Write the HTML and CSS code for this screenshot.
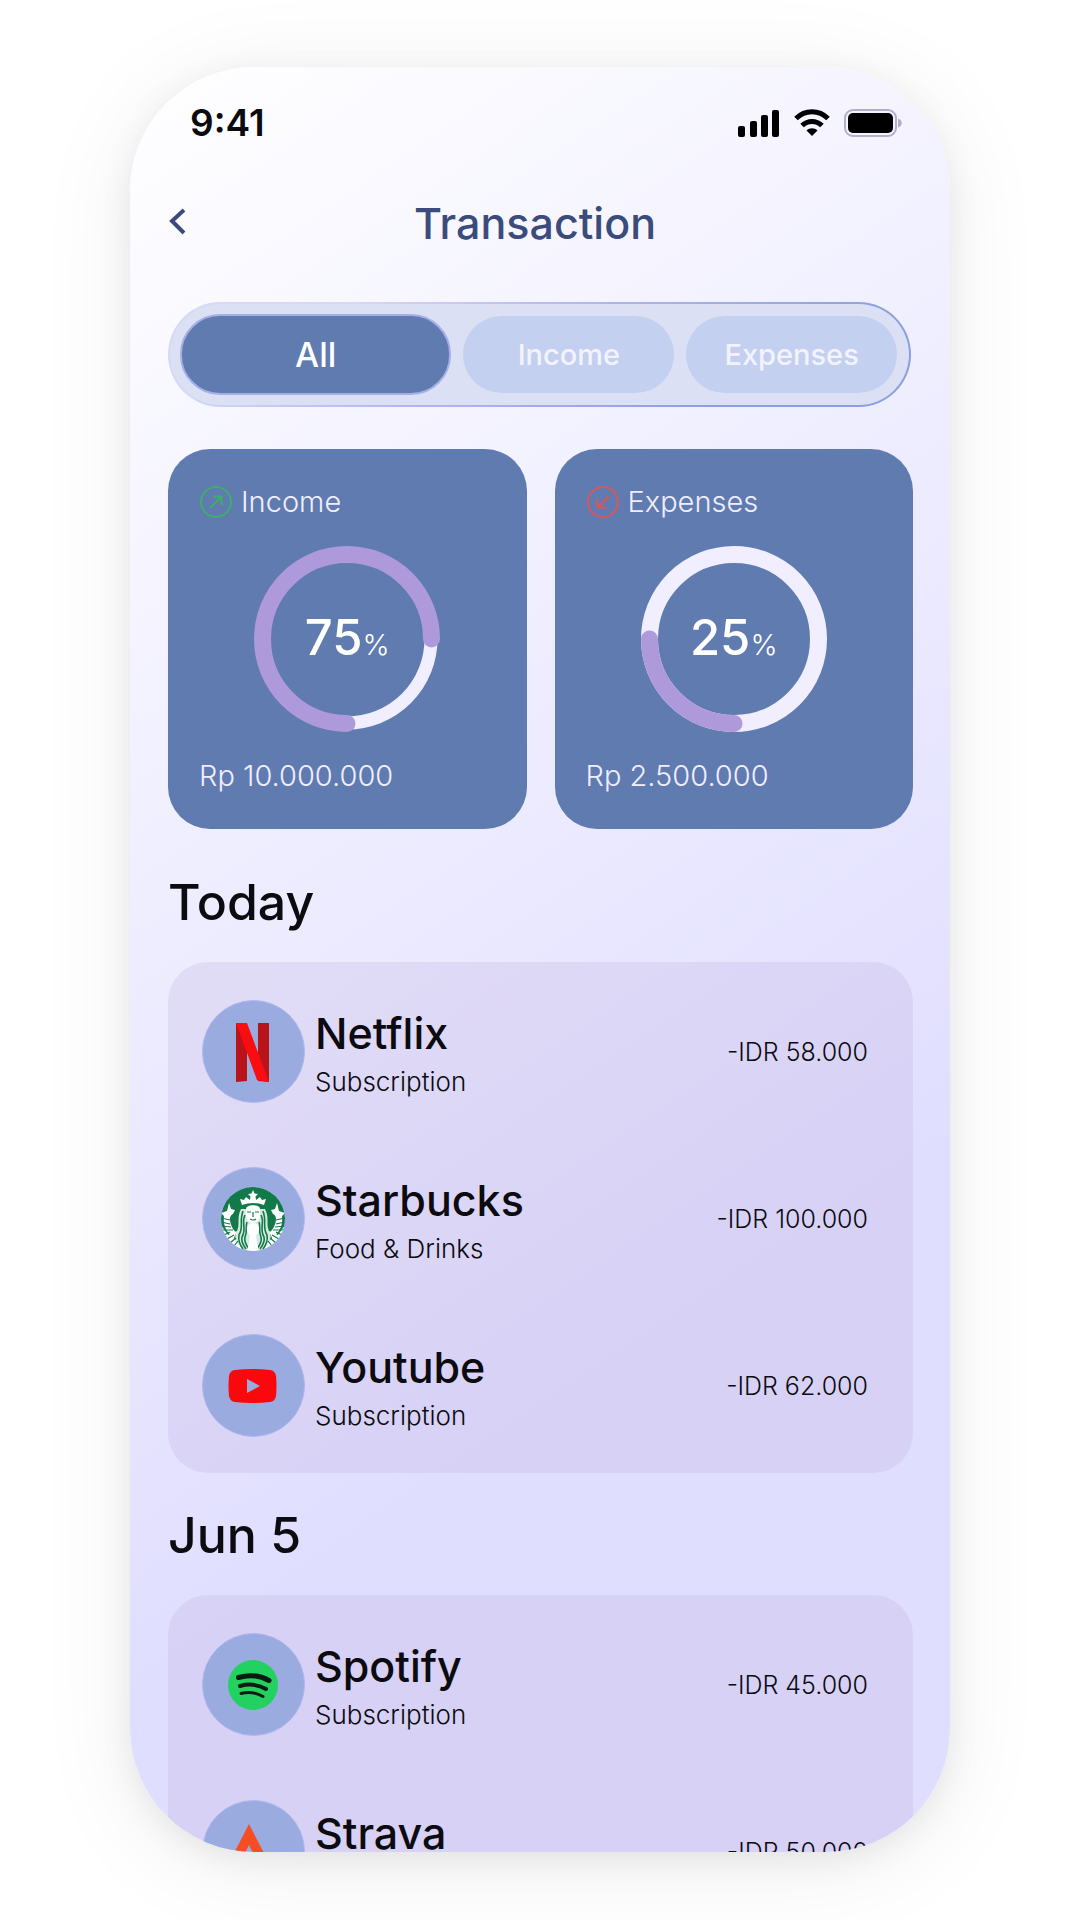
FILE: index.html
```html
<!DOCTYPE html>
<html lang="en">
<head>
    <meta charset="UTF-8">
    <meta name="viewport" content="width=device-width, initial-scale=1.0">
    <title>Transaction</title>
    <link rel="stylesheet" href="styles.css">
</head>
<body>
    <div class="phone">
        <div class="status-bar">
            <span class="time">9:41</span>
            <div class="status-icons">
                <svg width="42" height="28" viewBox="0 0 42 28">
                    <rect x="0" y="17" width="7" height="11" rx="2"/>
                    <rect x="12" y="12" width="7" height="16" rx="2"/>
                    <rect x="23" y="6" width="7" height="22" rx="2"/>
                    <rect x="34" y="1" width="7" height="27" rx="2"/>
                </svg>
                <svg width="36" height="28" viewBox="0 0 36 28" fill="none" stroke="#000" stroke-width="5">
                    <path d="M2 9.500C11 0.500 25 0.500 34 9.500"/>
                    <path d="M8 16.500C14 11 22 11 28 16.500"/>
                    <path d="M12.500 21.500C15.500 18.500 20.500 18.500 23.500 21.500L18 27Z" fill="#000" stroke="none"/>
                </svg>
                <svg width="58" height="28" viewBox="0 0 58 28">
                    <rect x="1" y="1" width="51" height="26" rx="8" fill="none" stroke="#b0b0cb" stroke-width="2"/>
                    <rect x="4" y="4" width="45" height="20" rx="5"/>
                    <path d="M54 9.500C59 11 59 17 54 18.500Z" fill="#b0b0cb"/>
                </svg>
            </div>
        </div>

        <header class="top-bar">
            <a href="#" class="back" aria-label="Back">
                <svg width="18" height="30" viewBox="0 0 18 30" fill="none" stroke="#3b4c7c" stroke-width="4">
                    <path d="M16 2L4 13L16 25"/>
                </svg>
            </a>
            <h1>Transaction</h1>
        </header>

        <main>
            <div class="tabs">
                <button class="tab active">All</button>
                <button class="tab">Income</button>
                <button class="tab">Expenses</button>
            </div>

            <div class="summary">
                <div class="card">
                    <div class="card-head">
                        <svg width="34" height="34" viewBox="0 0 34 34" fill="none" stroke="#3fae6c" stroke-width="2">
                            <circle cx="17" cy="17" r="15"/>
                            <path d="M11.500 22.500L22 12M14 11.500H22.500V20"/>
                        </svg>
                        <span>Income</span>
                    </div>
                    <div class="ring">
                        <svg width="186" height="186" viewBox="0 0 186 186" fill="none">
                            <circle cx="93" cy="93" r="84" stroke="#f0eeff" stroke-width="13"/>
                            <path d="M93 177.500A84.500 84.500 0 1 1 177.500 93" stroke="#ae9adb" stroke-width="17" stroke-linecap="round"/>
                        </svg>
                        <p class="percent">75<small>%</small></p>
                    </div>
                    <p class="total">Rp 10.000.000</p>
                </div>
                <div class="card">
                    <div class="card-head">
                        <svg width="34" height="34" viewBox="0 0 34 34" fill="none" stroke="#d9565a" stroke-width="2">
                            <circle cx="17" cy="17" r="15"/>
                            <path d="M23 11L12 22M20.500 22.500H11.500V13.500"/>
                        </svg>
                        <span>Expenses</span>
                    </div>
                    <div class="ring">
                        <svg width="186" height="186" viewBox="0 0 186 186" fill="none">
                            <circle cx="93" cy="93" r="84.500" stroke="#f0eeff" stroke-width="17"/>
                            <path d="M93 177.500A84.500 84.500 0 0 1 8.500 93" stroke="#ae9adb" stroke-width="17" stroke-linecap="round"/>
                        </svg>
                        <p class="percent">25<small>%</small></p>
                    </div>
                    <p class="total">Rp 2.500.000</p>
                </div>
            </div>

            <section>
                <h2>Today</h2>
                <ul class="list">
                    <li class="row">
                        <div class="logo">
                            <svg width="34" height="60" viewBox="0 0 34 60">
                                <path d="M0 1H11V59L0 60ZM22 1H33V60L22 59Z" fill="#b8141a"/>
                                <path d="M0 1H11L33 60L21 58Z" fill="#fa0d10"/>
                            </svg>
                        </div>
                        <div class="info">
                            <h3>Netflix</h3>
                            <p>Subscription</p>
                        </div>
                        <span class="amount">-IDR 58.000</span>
                    </li>
                    <li class="row">
                        <div class="logo">
                            <svg width="64" height="64" viewBox="0 0 64 64">
                                <defs>
                                    <clipPath id="badge"><circle cx="32" cy="32" r="32"/></clipPath>
                                </defs>
                                <g clip-path="url(#badge)">
                                    <circle cx="32" cy="32" r="32" fill="#127a49"/>
                                    <!-- hair -->
                                    <path d="M20 22C15 32 20 38 15 46C13 52 15 58 20 64H44C49 58 51 52 49 46C44 38 49 32 44 22Z" fill="#d5eae0"/>
                                    <g fill="none" stroke="#127a49" stroke-width="1.600">
                                        <path d="M22 24C18 34 23 40 18 48C17 53 19 58 22 62"/>
                                        <path d="M24 28C20 36 26 42 21 50C20 54 22 58 25 62"/>
                                        <path d="M26 35C24 39 27 43 24 50C23 54 25 58 28 62"/>
                                        <path d="M42 24C46 34 41 40 46 48C47 53 45 58 42 62"/>
                                        <path d="M40 28C44 36 38 42 43 50C44 54 42 58 39 62"/>
                                        <path d="M38 35C40 39 37 43 40 50C41 54 39 58 36 62"/>
                                    </g>
                                    <!-- face -->
                                    <path d="M25 22C25 17 39 17 39 22V28C39 33 35 36 32 36S25 33 25 28Z" fill="#fff"/>
                                    <path d="M26 25H30M34 25H38M32 25V30M29 32Q32 34 35 32" fill="none" stroke="#127a49" stroke-width="1.200"/>
                                    <!-- body -->
                                    <path d="M32 36C39 36 40 45 35 48L36 56L38 64H26L28 56L29 48C24 45 25 36 32 36Z" fill="#fff"/>
                                    <!-- crown -->
                                    <path d="M32 3L33.500 6.500L37 7L34.500 9.500L35 13L39 10L41 13L45 12L43 18Q32 14 21 18L19 12L23 13L25 10L29 13L29.500 9.500L27 7L30.500 6.500Z" fill="#fff"/>
                                    <!-- tails -->
                                    <path id="tail" d="M8 16L10 22L14 23L12 27C6 29 10 42 16 46L11 49C4 44 2 36 3 29L0 26L6 24ZM0 38L7 48L16 44L13 51L22 64H8Z" fill="#fff"/>
                                    <use href="#tail" transform="matrix(-1 0 0 1 64 0)"/>
                                    <g fill="none" stroke="#127a49" stroke-width="1.200">
                                        <path d="M0 31L9 33M0 35L9 37M0 39L10 40M1 43L12 43M3 48L9 45M6 52L13 48M9 56L15 51M13 59L17 54"/>
                                        <path d="M64 31L55 33M64 35L55 37M64 39L54 40M63 43L52 43M61 48L55 45M58 52L51 48M55 56L49 51M51 59L47 54"/>
                                    </g>
                                </g>
                            </svg>
                        </div>
                        <div class="info">
                            <h3>Starbucks</h3>
                            <p>Food &amp; Drinks</p>
                        </div>
                        <span class="amount">-IDR 100.000</span>
                    </li>
                    <li class="row">
                        <div class="logo">
                            <svg width="49" height="34" viewBox="0 0 49 34">
                                <path fill-rule="evenodd" fill="#fb080c" d="M7 1Q24.500 -1 42 1Q47 1.500 48 7Q49 17 48 27Q47 32.500 42 33Q24.500 35 7 33Q2 32.500 1 27Q0 17 1 7Q2 1.500 7 1ZM19 10V24L32 17Z"/>
                            </svg>
                        </div>
                        <div class="info">
                            <h3>Youtube</h3>
                            <p>Subscription</p>
                        </div>
                        <span class="amount">-IDR 62.000</span>
                    </li>
                </ul>
            </section>

            <section>
                <h2>Jun 5</h2>
                <ul class="list">
                    <li class="row">
                        <div class="logo">
                            <svg width="50" height="50" viewBox="0 0 50 50">
                                <circle cx="25" cy="25" r="25" fill="#22d160"/>
                                <g fill="none" stroke="#0b1a12" stroke-linecap="round">
                                    <path d="M10.500 17.500C21 14.500 32 15.500 41 20.500" stroke-width="5"/>
                                    <path d="M12 26C21 23.500 30 24.500 38 29" stroke-width="4"/>
                                    <path d="M13 33.500C21 31.500 28 32.500 35 36.500" stroke-width="3"/>
                                </g>
                            </svg>
                        </div>
                        <div class="info">
                            <h3>Spotify</h3>
                            <p>Subscription</p>
                        </div>
                        <span class="amount">-IDR 45.000</span>
                    </li>
                    <li class="row">
                        <div class="logo">
                            <svg width="46" height="56" viewBox="0 0 46 56">
                                <path d="M19 0L38 37H27L19 21L11 37H0Z" fill="#f64d22"/>
                                <path d="M27 37L32 46L38 37H44L32 56L20 37Z" fill="#f9a184"/>
                            </svg>
                        </div>
                        <div class="info">
                            <h3>Strava</h3>
                            <p>Subscription</p>
                        </div>
                        <span class="amount">-IDR 50.000</span>
                    </li>
                </ul>
            </section>
        </main>
    </div>
</body>
</html>
```

FILE: styles.css
```css
* {
    box-sizing: border-box;
    margin: 0;
    padding: 0;
}

body {
    font-family: Inter, "Liberation Sans", sans-serif;
    background: #fff;
    color: #0b0b10;
    min-height: 100vh;
    padding: 67px 130px 68px;
    overflow: hidden;
}

.phone {
    height: calc(100vh - 135px);
    overflow: hidden;
    border-radius: 124px;
    background: linear-gradient(146deg, #fff, #e0deff 70%);
    box-shadow: 0 8px 32px rgba(0, 0, 0, 0.07), 0 12px 100px rgba(0, 0, 0, 0.07);
}

/* Status bar */
.status-bar {
    display: flex;
    justify-content: space-between;
    align-items: center;
    padding: 34px 48px 0 60px;
}

.time {
    font-size: 37px;
    font-weight: 600;
    line-height: 44px;
}

.status-icons {
    display: flex;
    gap: 14px;
}

/* Title */
.top-bar {
    display: flex;
    align-items: center;
    padding: 52px 66px 53px 38px;
}

.back {
    display: flex;
}

h1 {
    flex: 1;
    text-align: center;
    font-size: 43px;
    font-weight: 500;
    line-height: 52px;
    color: #3b4c7c;
}

main {
    padding: 0 37px 0 38px;
}

/* Tabs */
.tabs {
    display: flex;
    gap: 12px;
    height: 105px;
    margin-right: 2px;
    padding: 10px 12px 10px 10px;
    border: 2px solid transparent;
    border-radius: 53px;
    background: linear-gradient(#dbe0f5, #dbe0f5) padding-box,
        linear-gradient(150deg, #d6d8f4 20%, #b4b6f0 45%, #8b9fdc 80%) border-box;
}

.tab {
    flex: 212;
    margin: 2px 0;
    border: none;
    border-radius: 40px;
    background: #c4d0ef;
    color: #f3f3ff;
    font-family: inherit;
    font-size: 29px;
    font-weight: 500;
    cursor: pointer;
}

.tab.active {
    flex: 269;
    margin: 0;
    border: 2px solid #a3afe6;
    background: #607bb0;
    color: #fff;
    font-size: 34px;
}

/* Summary cards */
.summary {
    display: grid;
    grid-template-columns: 1fr 1fr;
    gap: 28px;
    margin: 42px 0 11px;
}

.card {
    padding: 35px 31px;
    border-radius: 42px;
    background: #607bb0;
    color: #f0eeff;
    font-size: 29px;
    font-weight: 300;
    line-height: 36px;
}

.card-head {
    display: flex;
    align-items: center;
    gap: 8px;
    height: 36px;
}

.ring {
    display: grid;
    place-items: center;
    margin: 26px 0;
}

.ring svg,
.percent {
    grid-area: 1 / 1;
}

.percent {
    padding-top: 4px;
    color: #fff;
    font-size: 49px;
    font-weight: 500;
}

.percent small {
    font-size: 29px;
    font-weight: 300;
}

/* Transactions */
section {
    padding-top: 32px;
}

h2 {
    margin-bottom: 30px;
    font-size: 50px;
    font-weight: 500;
    line-height: 60px;
}

.list {
    display: flex;
    flex-direction: column;
    gap: 64px;
    padding: 38px 45px 36px 34px;
    border-radius: 40px;
    background: rgba(180, 160, 210, 0.2);
    list-style: none;
}

.row {
    display: flex;
    align-items: center;
    gap: 10px;
    height: 103px;
}

.logo {
    display: flex;
    justify-content: center;
    align-items: center;
    flex: none;
    width: 103px;
    height: 103px;
    padding-right: 2px;
    border: 1px solid #b0b7ee;
    border-radius: 50%;
    background: #9aabe0;
}

.info {
    flex: 1;
    padding-top: 4px;
}

.info h3 {
    font-size: 43px;
    font-weight: 500;
    line-height: 56px;
}

.info p {
    font-size: 26px;
    font-weight: 300;
    line-height: 42px;
}

.amount {
    font-size: 25px;
    font-weight: 300;
}
```
